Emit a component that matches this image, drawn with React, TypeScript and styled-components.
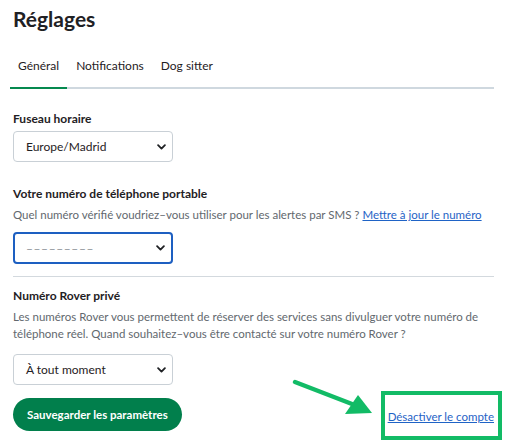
import React from "react";
import styled, { createGlobalStyle } from "styled-components";

const Global = createGlobalStyle`
  html, body { margin: 0; padding: 0; background: #ffffff; }
  body { font-family: "Lato", "Noto Sans", sans-serif; color: #1f2124; }
  * { box-sizing: border-box; }
`;

const Page = styled.div`
  position: relative;
  width: 506px;
  height: 445px;
  padding: 0 12px 0 13px;
  overflow: hidden;
`;

const Title = styled.h1`
  margin: 0;
  padding-top: 6px;
  font-size: 21px;
  line-height: 26px;
  font-weight: 700;
  color: #1f2124;
`;

const Tabs = styled.div`
  display: flex;
  gap: 1px;
  margin: 16px 0 0 -3px;
  border-bottom: 2px solid #cfd8df;
`;

const Tab = styled.div<{ $active?: boolean }>`
  padding: 10px 8px 13px;
  font-size: 12px;
  line-height: 16px;
  color: #1f2124;
  margin-bottom: -2px;
  border-bottom: 2px solid ${(p) => (p.$active ? "#05894f" : "transparent")};
`;

const Section = styled.section<{ $divider?: boolean; $top?: number; $bottom?: number }>`
  display: flex;
  flex-direction: column;
  align-items: flex-start;
  margin-top: ${(p) => p.$top ?? 0}px;
  padding-bottom: ${(p) => p.$bottom ?? 0}px;
  padding-top: ${(p) => (p.$divider ? "11px" : "0")};
  border-top: ${(p) => (p.$divider ? "1px solid #d3d9de" : "none")};
`;

const Label = styled.div`
  font-size: 12px;
  line-height: 16px;
  font-weight: 700;
  color: #1f2124;
`;

const Desc = styled.p`
  margin: 4px 0 0;
  font-size: 11.5px;
  line-height: 17px;
  color: #62686e;
`;

const Link = styled.a<{ $size?: number }>`
  color: #1f63c6;
  text-decoration: underline;
  font-size: ${(p) => p.$size ?? 11.5}px;
  cursor: pointer;
`;

const Spacer = styled.div<{ $h: number }>`
  height: ${(p) => p.$h}px;
  flex-shrink: 0;
`;

const SelectWrap = styled.div<{ $focused?: boolean }>`
  position: relative;
  width: 160px;
  height: ${(p) => (p.$focused ? "32px" : "31px")};
  border: ${(p) => (p.$focused ? "2px solid #1d5fc1" : "1px solid #c9d0d6")};
  border-radius: 4px;
  display: flex;
  align-items: center;
  padding-left: ${(p) => (p.$focused ? "11px" : "12px")};
  font-size: 12px;
  color: #1f2124;
  background: #ffffff;
`;

const Chevron = styled.svg`
  position: absolute;
  right: 6px;
  top: 50%;
  transform: translateY(-50%);
`;

const Dashes = styled.span`
  color: #8d9298;
  letter-spacing: 0.6px;
`;

const Footer = styled.div`
  display: flex;
  justify-content: space-between;
  align-items: center;
  margin-top: 13px;
`;

const SaveButton = styled.button`
  height: 33px;
  padding: 0 14px;
  border: none;
  border-radius: 17px;
  background: #017f4c;
  color: #ffffff;
  font-family: "Lato", "Noto Sans", sans-serif;
  font-size: 11.5px;
  font-weight: 700;
  cursor: pointer;
`;

const LinkBox = styled.div`
  position: relative;
`;

const Highlight = styled.div`
  position: absolute;
  left: -7px;
  right: -8px;
  top: -14px;
  bottom: -16px;
  border: 4px solid #12bb66;
`;

const Arrow = styled.svg`
  position: absolute;
  left: 290px;
  top: 376px;
`;

function Select({ children, focused }: { children: React.ReactNode; focused?: boolean }) {
  return (
    <SelectWrap $focused={focused}>
      {children}
      <Chevron width="9" height="6" viewBox="0 0 9 6">
        <path d="M1.1 1.2 L4.5 4.6 L7.9 1.2" fill="none" stroke="#1f2124" strokeWidth="1.8" strokeLinecap="round" strokeLinejoin="round" />
      </Chevron>
    </SelectWrap>
  );
}

export default function App() {
  return (
    <Page>
      <Global />
      <Title>Réglages</Title>
      <Tabs>
        <Tab $active>Général</Tab>
        <Tab>Notifications</Tab>
        <Tab>Dog sitter</Tab>
      </Tabs>

      <Section $top={22}>
        <Label>Fuseau horaire</Label>
        <Spacer $h={4} />
        <Select>Europe/Madrid</Select>
      </Section>

      <Section $top={24} $bottom={12}>
        <Label>Votre numéro de téléphone portable</Label>
        <Desc>
          Quel numéro vérifié voudriez–vous utiliser pour les alertes par SMS ?{" "}
          <Link>Mettre à jour le numéro</Link>
        </Desc>
        <Spacer $h={9} />
        <Select focused>
          <Dashes>–––––––––</Dashes>
        </Select>
      </Section>

      <Section $divider>
        <Label>Numéro Rover privé</Label>
        <Desc>
          Les numéros Rover vous permettent de réserver des services sans divulguer votre numéro de
          téléphone réel. Quand souhaitez–vous être contacté sur votre numéro Rover ?
        </Desc>
        <Spacer $h={12} />
        <Select>À tout moment</Select>
      </Section>

      <Footer>
        <SaveButton>Sauvegarder les paramètres</SaveButton>
        <LinkBox>
          <Link $size={11.5}>Désactiver le compte</Link>
          <Highlight />
        </LinkBox>
      </Footer>

      <Arrow width="90" height="45" viewBox="0 0 90 45">
        <line x1="5" y1="6" x2="62" y2="28" stroke="#12bb66" strokeWidth="4.5" strokeLinecap="round" />
        <polygon points="82,37 55,38 68,19" fill="#12bb66" />
      </Arrow>
    </Page>
  );
}
